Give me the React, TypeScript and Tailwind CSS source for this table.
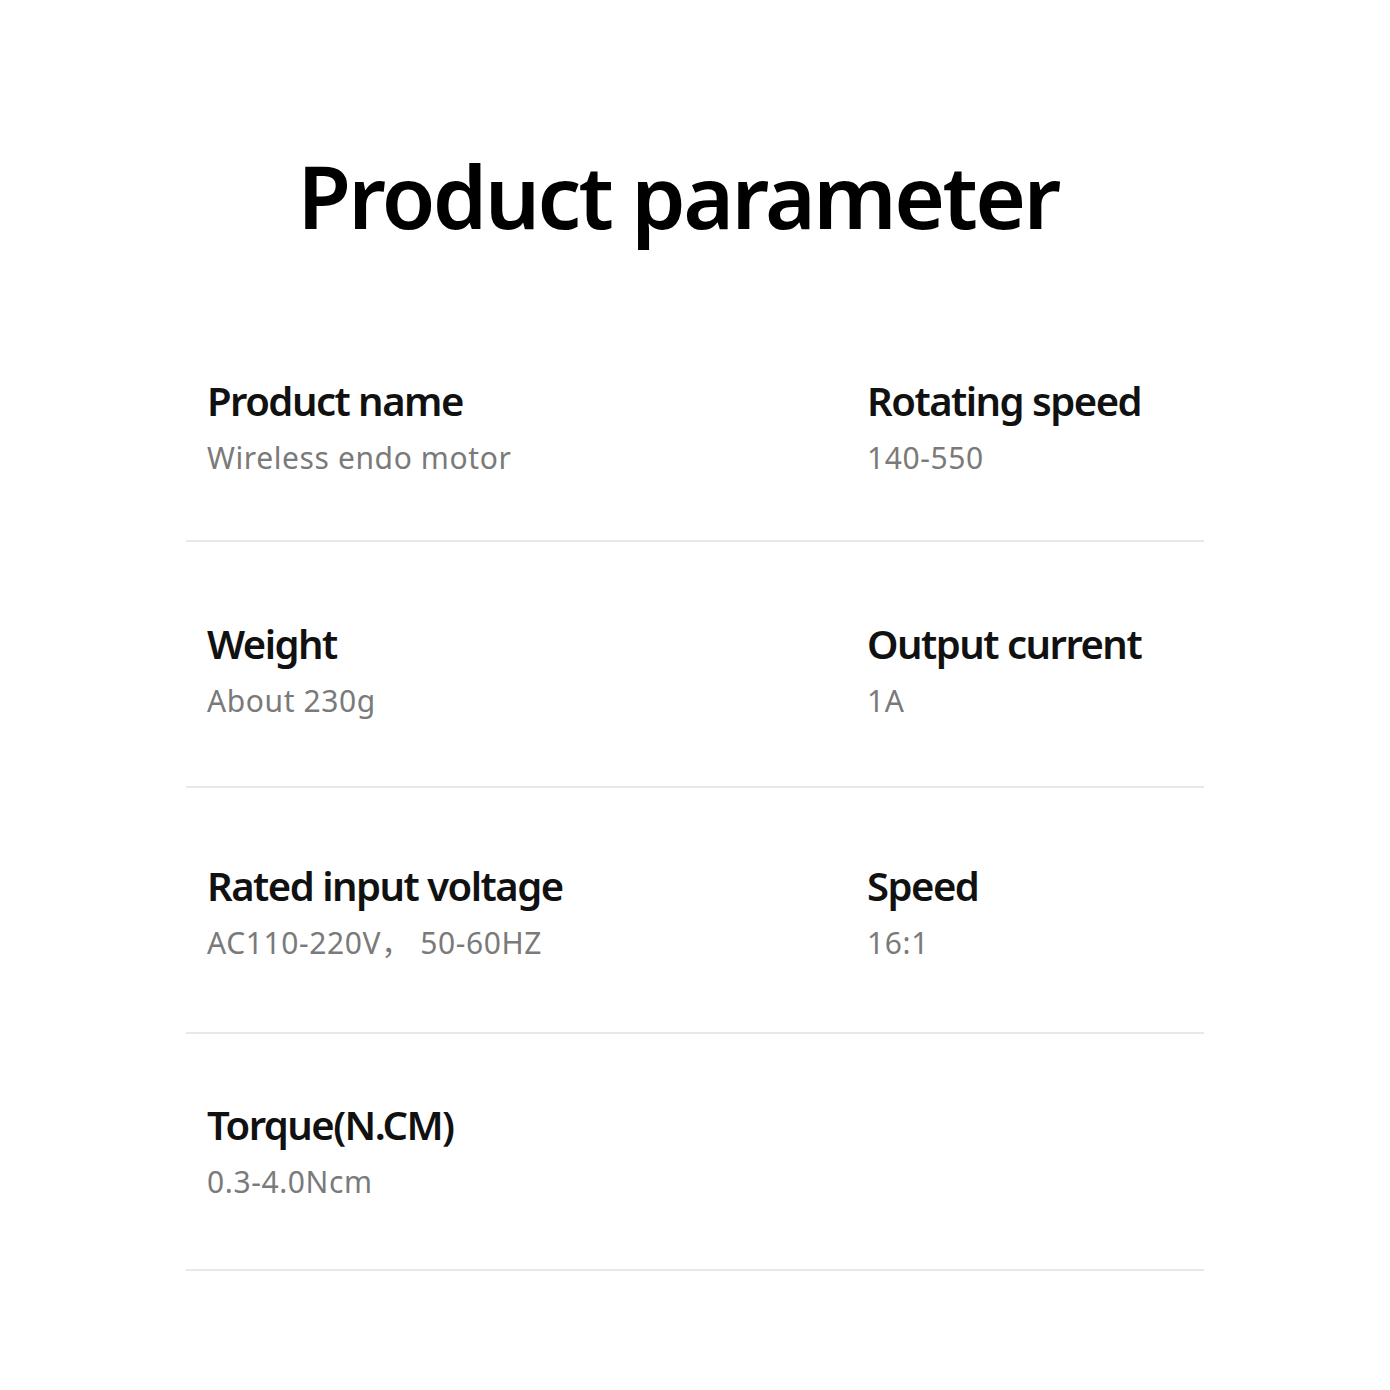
const rows: [string, string, string?, string?][] = [
  ["Product name", "Wireless endo motor", "Rotating speed", "140-550"],
  ["Weight", "About 230g", "Output current", "1A"],
  ["Rated input voltage", "AC110-220V， 50-60HZ", "Speed", "16:1"],
  ["Torque(N.CM)", "0.3-4.0Ncm"],
]

// per-row spacing, matched to the reference dividers
const pads = [
  "pt-[78px] pb-[64px]",
  "pt-[78px] pb-[67px]",
  "pt-[74px] pb-[71px]",
  "pt-[67px] pb-[69px]",
]

function Param({ label, value }: { label?: string; value?: string }) {
  if (!label) return <div />
  return (
    <div className="flex flex-col gap-[15px]">
      <div className="text-[40px] leading-[48px] font-semibold tracking-[-1.5px] text-[#111]">{label}</div>
      <div className="text-[30px] leading-[36px] tracking-[0.6px] text-[#7a7a7a] whitespace-pre">{value}</div>
    </div>
  )
}

export default function App() {
  return (
    <div
      className="w-[1390px] h-[1390px] bg-white pt-[152px]"
      style={{ fontFamily: '"Noto Sans", "Open Sans", "Noto Sans CJK SC", sans-serif' }}
    >
      <h1 className="text-center text-[87px] leading-[87px] font-semibold tracking-[-2.6px] text-black pr-[34px]">
        Product parameter
      </h1>
      <div className="mx-[186px] mt-[60px]">
        {rows.map(([l1, v1, l2, v2], i) => (
          <div
            key={i}
            className={"grid grid-cols-[660px_1fr] pl-[21px] border-b-2 border-[#e8e8e8] " + pads[i]}
          >
            <Param label={l1} value={v1} />
            <Param label={l2} value={v2} />
          </div>
        ))}
      </div>
    </div>
  )
}
